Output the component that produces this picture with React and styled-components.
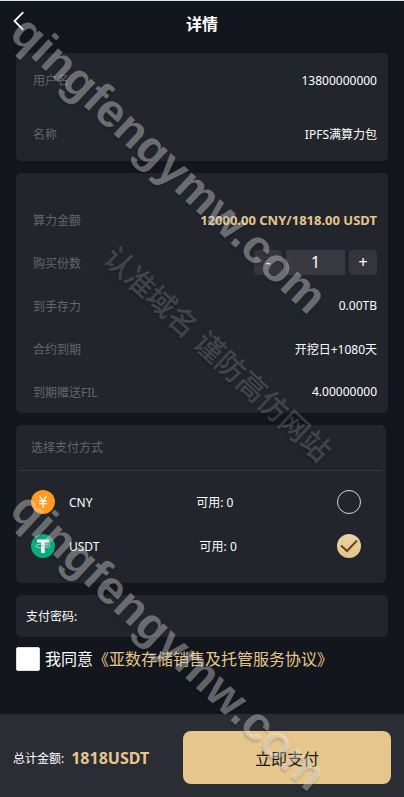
import { useState } from "react";
import styled, { createGlobalStyle } from "styled-components";

const App = () => {
    const [count, setCount] = useState(1);
    const [method, setMethod] = useState("USDT");
    const [agree, setAgree] = useState(false);

    return(
        <Page>
            <GlobalStyle/>
            <Header>
                <Back type="button" aria-label="返回">
                    <svg width="12" height="20" viewBox="0 0 12 20">
                        <path d="M11.300 1.200L2.500 10l8.800 8.800" fill="none" stroke="#fff" strokeWidth="1.8"/>
                    </svg>
                </Back>
                <h1>详情</h1>
            </Header>
            <Content>
                <Card>
                    <Row $tall><Label>用户名</Label><Value>13800000000</Value></Row>
                    <Row $tall><Label>名称</Label><Value>IPFS满算力包</Value></Row>
                </Card>
                <Card $top="25px">
                    <Row><Label>算力金额</Label><Value $gold>12000.00 CNY/1818.00 USDT</Value></Row>
                    <Row>
                        <Label as="label" htmlFor="count">购买份数</Label>
                        <Stepper>
                            <button type="button" onClick={() => setCount(Math.max(1, count - 1))}>-</button>
                            <input
                                id="count"
                                inputMode="numeric"
                                value={count}
                                onChange={(e) => setCount(Number(e.target.value) || 1)}
                            />
                            <button type="button" onClick={() => setCount(count + 1)}>+</button>
                        </Stepper>
                    </Row>
                    <Row><Label>到手存力</Label><Value>0.00TB</Value></Row>
                    <Row><Label>合约到期</Label><Value>开挖日+1080天</Value></Row>
                    <Row><Label>到期赠送FIL</Label><Value>4.00000000</Value></Row>
                </Card>
                <PayCard>
                    <PayTitle>选择支付方式</PayTitle>
                    <PayRow>
                        <Coin><CnyIcon/>CNY</Coin>
                        <span>可用: 0</span>
                        <Pick name="CNY" method={method} onPick={setMethod}/>
                    </PayRow>
                    <PayRow>
                        <Coin><UsdtIcon/>USDT</Coin>
                        <span>可用: 0</span>
                        <Pick name="USDT" method={method} onPick={setMethod}/>
                    </PayRow>
                </PayCard>
                <Password>
                    <label htmlFor="password">支付密码:</label>
                    <input id="password" type="password"/>
                </Password>
                <Agree>
                    <input
                        id="agree"
                        type="checkbox"
                        checked={agree}
                        onChange={(e) => setAgree(e.target.checked)}
                    />
                    <label htmlFor="agree">我同意</label>
                    <a href="#agreement">《亚数存储销售及托管服务协议》</a>
                </Agree>
            </Content>
            <Footer>
                <Total>总计金额: <strong>1818USDT</strong></Total>
                <Submit type="button">立即支付</Submit>
            </Footer>
            <Watermark $x="19px" $y="23px">qingfengymw.com</Watermark>
            <Watermark $x="108px" $y="252px" $small>认准域名 谨防高仿网站</Watermark>
            <Watermark $x="19px" $y="500px">qingfengymw.com</Watermark>
        </Page>
    )
};

const Pick = ({ name, method, onPick }) => (
    <Radio>
        <input
            type="radio"
            name="method"
            aria-label={name}
            checked={method === name}
            onChange={() => onPick(name)}
        />
        {method === name && (
            <svg width="24" height="24" viewBox="0 0 24 24">
                <path d="M4 11.500l6 5.500 10-10.500" fill="none" stroke="#684817" strokeWidth="2"/>
            </svg>
        )}
    </Radio>
);

const CnyIcon = () => (
    <svg width="24" height="24" viewBox="0 0 24 24">
        <circle cx="12" cy="12" r="12" fill="#ff9b22"/>
        <path d="M8.7 6.4l3.3 4.4 3.3-4.4M8.2 11h7.6M8.2 13.7h7.6M12 10.8v6.7" fill="none" stroke="#fff" strokeWidth="1.3"/>
    </svg>
);

const UsdtIcon = () => (
    <svg width="24" height="24" viewBox="0 0 24 24">
        <circle cx="12" cy="12" r="12" fill="#0aab7c"/>
        <path d="M6 5.5h12v3h-4.200V19h-3.600V8.500H6z" fill="#fff"/>
        <ellipse cx="12" cy="12" rx="7.500" ry="1.900" fill="none" stroke="#fff" strokeOpacity=".75" strokeWidth=".7"/>
    </svg>
);

export default App;

const GlobalStyle = createGlobalStyle`
    * {
        box-sizing: border-box;
    }
    body {
        margin: 0;
        background-color: #13161d;
        color: #fff;
        font-family: "Noto Sans", "Noto Sans CJK SC", sans-serif;
        font-size: 12px;
    }
    button, input {
        font: inherit;
        color: inherit;
        border: 0;
        padding: 0;
    }
    button {
        cursor: pointer;
    }
`;

const Page = styled.div`
    position: relative;
    min-height: 100vh;
    display: flex;
    flex-direction: column;
    overflow: hidden;
    border-top: 1px solid #dde8e4;
`;

const Header = styled.header`
    display: grid;
    grid-template-columns: 24px 1fr 24px;
    align-items: center;
    height: 44px;
    padding: 0 12px;
    h1 {
        margin: 0;
        font-size: 16px;
        text-align: center;
    }
`;

const Back = styled.button`
    display: flex;
    background: none;
    padding-bottom: 4px;
`;

const Content = styled.main`
    display: flex;
    flex-direction: column;
    gap: 12px;
    padding: 8px 16px;
`;

const Card = styled.section`
    padding: ${({ $top }) => $top || 0} 11px 0 17px;
    background-color: #22252c;
    border-radius: 5px;
`;

const Row = styled.div`
    display: flex;
    align-items: center;
    justify-content: space-between;
    height: ${({ $tall }) => ($tall ? "54px" : "43px")};
`;

const Label = styled.span`
    color: #65676a;
`;

const Value = styled.span`
    color: ${({ $gold }) => ($gold ? "#e6c68c" : "#fff")};
    font-size: ${({ $gold }) => ($gold ? "13px" : "12px")};
    font-weight: ${({ $gold }) => ($gold ? "bold" : "normal")};
`;

const Stepper = styled.div`
    display: flex;
    gap: 4px;
    font-size: 16px;
    button, input {
        width: 28px;
        height: 25px;
        background-color: #35363b;
        border-radius: 4px;
        line-height: 25px;
        text-align: center;
    }
    input {
        width: 59px;
        background-color: #393a3f;
        border-radius: 0;
    }
`;

const PayCard = styled.section`
    margin-right: 2px;
    padding: 0 4px 15px;
    background-color: #22252c;
    border-radius: 5px;
`;

const PayTitle = styled.h2`
    margin: 0 0 9px;
    padding: 0 11px;
    border-bottom: 1px solid #3a3c3f;
    color: #65676a;
    font-size: 12px;
    font-weight: normal;
    line-height: 45px;
`;

const PayRow = styled.div`
    display: flex;
    align-items: center;
    justify-content: space-between;
    height: 44px;
    padding: 0 21px 0 11px;
`;

const Coin = styled.span`
    display: flex;
    align-items: center;
    gap: 14px;
`;

const Radio = styled.span`
    display: grid;
    input {
        grid-area: 1 / 1;
        appearance: none;
        width: 24px;
        height: 24px;
        margin: 0;
        border: 1px solid #d5d6d7;
        border-radius: 50%;
    }
    input:checked {
        border: 0;
        background: linear-gradient(#ead3a6, #e4c388);
    }
    svg {
        grid-area: 1 / 1;
        pointer-events: none;
    }
`;

const Password = styled.div`
    display: flex;
    align-items: center;
    gap: 8px;
    height: 42px;
    padding: 0 10px;
    background-color: #22252c;
    border-radius: 5px;
    input {
        flex: 1;
        min-width: 0;
        background: none;
        outline: none;
    }
`;

const Agree = styled.div`
    display: flex;
    align-items: center;
    margin-top: -2px;
    font-size: 16px;
    line-height: 24px;
    input {
        appearance: none;
        width: 24px;
        height: 24px;
        margin: 0 5px 0 0;
        background-color: #fff;
        border: 1px solid #dcdee2;
        border-radius: 2px;
    }
    input:checked {
        background-color: #e6c68c;
    }
    a {
        color: #e6c68c;
        text-decoration: none;
    }
`;

const Footer = styled.footer`
    display: flex;
    align-items: center;
    justify-content: space-between;
    margin-top: auto;
    padding: 17px 13px 13px;
    background-color: #2b2d35;
`;

const Total = styled.div`
    display: flex;
    align-items: center;
    gap: 7px;
    strong {
        color: #e6c68c;
        font-size: 16px;
    }
`;

const Submit = styled.button`
    width: 55%;
    height: 53px;
    background-color: #e6c68c;
    border-radius: 8px;
    color: #15171c;
    font-size: 16px;
`;

const Watermark = styled.div`
    position: absolute;
    left: ${({ $x }) => $x};
    top: ${({ $y }) => $y};
    height: 0;
    line-height: 0;
    white-space: nowrap;
    transform: rotate(43deg);
    transform-origin: 0 0;
    pointer-events: none;
    color: ${({ $small }) => ($small ? "rgba(255, 255, 255, 0.18)" : "rgba(255, 255, 255, 0.34)")};
    font-family: "Liberation Sans", "Noto Sans CJK SC", sans-serif;
    font-size: ${({ $small }) => ($small ? "29px" : "47px")};
    font-weight: ${({ $small }) => ($small ? "500" : "bold")};
    text-shadow: 1px 2px 2px rgba(0, 0, 0, 0.15);
`;
